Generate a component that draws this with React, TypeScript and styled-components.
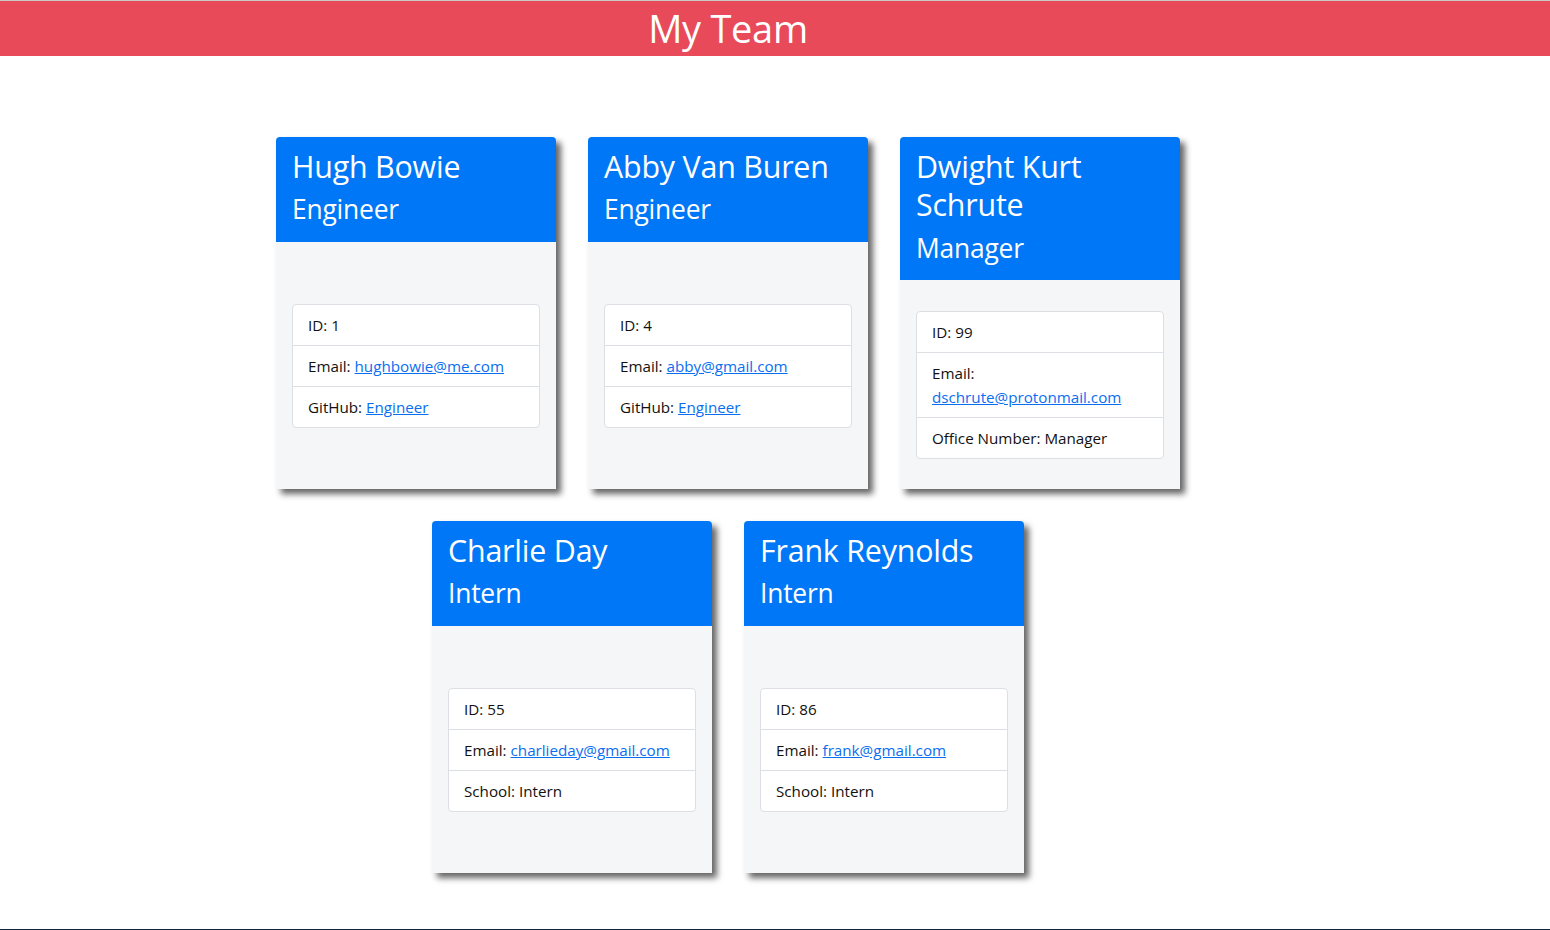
import React from "react";
import styled, { createGlobalStyle } from "styled-components";

const GlobalStyle = createGlobalStyle`
  html, body { margin: 0; padding: 0; background: #fff; }
  body {
    font-family: "Open Sans", "Noto Sans", "Liberation Sans", sans-serif;
    color: #212529;
  }
  * { box-sizing: border-box; }
`;

const Page = styled.div`
  min-height: 930px;
  display: flex;
  flex-direction: column;
  border-top: 1px solid #c8c8c8;
`;

const Banner = styled.header`
  background: #e84a59;
  height: 55px;
  display: flex;
  align-items: center;
  justify-content: center;
  padding-right: 94px;
`;

const Title = styled.h1`
  margin: 0;
  color: #fff;
  font-size: 38px;
  font-weight: 400;
  line-height: 1.2;
  letter-spacing: -0.3px;
`;

const Main = styled.main`
  flex: 1;
  padding: 81px 94px 0 0;
`;

const Grid = styled.div`
  width: 968px;
  margin: 0 auto;
  display: flex;
  flex-wrap: wrap;
  justify-content: center;
  gap: 32px;
`;

const Card = styled.article`
  width: 280px;
  height: 352px;
  display: flex;
  flex-direction: column;
  border-radius: 4px 4px 0 0;
  background: #f5f6f8;
  box-shadow: 5px 5px 6px #666;
`;

const CardHeader = styled.div`
  background: #0077f6;
  color: #fff;
  padding: 11px 16px 13px;
  border-radius: 4px 4px 0 0;
`;

const Name = styled.h2`
  margin: 0 0 7px;
  font-size: 30.4px;
  font-weight: 400;
  line-height: 38.4px;
  letter-spacing: -0.2px;
`;

const Role = styled.h3`
  margin: 0 0 2px;
  font-size: 26.4px;
  font-weight: 400;
  line-height: 33.6px;
  letter-spacing: -0.2px;
`;

const CardBody = styled.div`
  flex: 1;
  display: flex;
  flex-direction: column;
  justify-content: center;
  padding: 0 16px;
`;

const List = styled.ul`
  list-style: none;
  margin: 0;
  padding: 0;
  background: #fff;
  border: 1px solid #dcdfe3;
  border-radius: 4px;
`;

const Item = styled.li`
  padding: 8px 15px;
  font-size: 15.2px;
  line-height: 24px;
  color: #111;
  & + & { border-top: 1px solid #dcdfe3; }
`;

const Link = styled.a`
  color: #0a6ef0;
  text-decoration: underline;
`;

const FooterRule = styled.footer`
  height: 1px;
  background: #0b2840;
`;

type Member = {
  name: string;
  role: string;
  id: number;
  email: string;
  extraLabel: string;
  extraValue: string;
  extraLink?: boolean;
};

const members: Member[] = [
  { name: "Hugh Bowie", role: "Engineer", id: 1, email: "hughbowie@me.com", extraLabel: "GitHub", extraValue: "Engineer", extraLink: true },
  { name: "Abby Van Buren", role: "Engineer", id: 4, email: "abby@gmail.com", extraLabel: "GitHub", extraValue: "Engineer", extraLink: true },
  { name: "Dwight Kurt Schrute", role: "Manager", id: 99, email: "dschrute@protonmail.com", extraLabel: "Office Number", extraValue: "Manager" },
  { name: "Charlie Day", role: "Intern", id: 55, email: "charlieday@gmail.com", extraLabel: "School", extraValue: "Intern" },
  { name: "Frank Reynolds", role: "Intern", id: 86, email: "frank@gmail.com", extraLabel: "School", extraValue: "Intern" },
];

function MemberCard({ m }: { m: Member }) {
  return (
    <Card>
      <CardHeader>
        <Name>{m.name}</Name>
        <Role>{m.role}</Role>
      </CardHeader>
      <CardBody>
        <List>
          <Item>ID: {m.id}</Item>
          <Item>
            Email: <Link href={`mailto:${m.email}`}>{m.email}</Link>
          </Item>
          <Item>
            {m.extraLabel}:{" "}
            {m.extraLink ? <Link href="#">{m.extraValue}</Link> : m.extraValue}
          </Item>
        </List>
      </CardBody>
    </Card>
  );
}

export default function App() {
  return (
    <>
      <GlobalStyle />
      <Page>
        <Banner>
          <Title>My Team</Title>
        </Banner>
        <Main>
          <Grid>
            {members.map((m) => (
              <MemberCard key={m.id} m={m} />
            ))}
          </Grid>
        </Main>
        <FooterRule />
      </Page>
    </>
  );
}
